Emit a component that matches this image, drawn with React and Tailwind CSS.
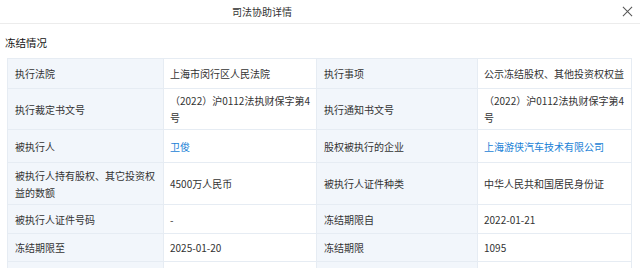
import { Fragment } from 'react';

const rows = [
  [
    { label: '执行法院', value: '上海市闵行区人民法院' },
    { label: '执行事项', value: '公示冻结股权、其他投资权权益' },
  ],
  [
    { label: '执行裁定书文号', value: ['（2022）沪0112法执财保字第4', '号'] },
    { label: '执行通知书文号', value: ['（2022）沪0112法执财保字第4', '号'] },
  ],
  [
    { label: '被执行人', value: '卫俊', link: true },
    { label: '股权被执行的企业', value: '上海游侠汽车技术有限公司', link: true },
  ],
  [
    { label: ['被执行人持有股权、其它投资权', '益的数额'], value: '4500万人民币' },
    { label: '被执行人证件种类', value: '中华人民共和国居民身份证' },
  ],
  [
    { label: '被执行人证件号码', value: '-' },
    { label: '冻结期限自', value: '2022-01-21' },
  ],
  [
    { label: '冻结期限至', value: '2025-01-20' },
    { label: '冻结期限', value: '1095' },
  ],
  [
    { label: '公示日期', value: '2022-01-21' },
    { label: '', value: '' },
  ],
];

const heights = ['h-[30px]', 'h-[40px]', 'h-[33px]', 'h-[42px]', 'h-[29px]', 'h-[28px]', 'h-[28px]'];

function Lines({ text }) {
  if (!Array.isArray(text)) return text;
  return text.map((t, i) => (
    <span key={i} className="block">{t}</span>
  ));
}

export default function App() {
  return (
    <div
      className="w-[640px] h-[268px] overflow-hidden bg-white text-[#333]"
      style={{ fontFamily: '"Noto Sans CJK SC", "Noto Sans", sans-serif' }}
    >
      <div className="h-[24px] border-b border-[#ececec] flex items-center pr-[7px]">
        <span className="pl-[232px] text-[10px] text-[#333] leading-none">司法协助详情</span>
        <svg className="ml-auto w-[11px] h-[11px]" viewBox="0 0 12 12" fill="none" stroke="#555" strokeWidth="1.1">
          <path d="M1 1l10 10M11 1L1 11" />
        </svg>
      </div>

      <div className="h-[34px] flex items-center pl-[5px] pt-[4px] text-[10.5px] text-[#111]">冻结情况</div>

      <table className="ml-[7px] border-collapse table-fixed w-[624px] text-[10px] leading-[17px] whitespace-nowrap">
        <colgroup>
          <col className="w-[156px]" />
          <col className="w-[153px]" />
          <col className="w-[161px]" />
          <col className="w-[154px]" />
        </colgroup>
        <tbody>
          {rows.map((row, i) => (
            <tr key={i} className={heights[i]}>
              {row.map((cell, j) => (
                <Fragment key={j}>
                  <td className="bg-[#f2f6fb] border border-[#e6ecf3] px-[7px] py-[3px] align-middle">
                    <Lines text={cell.label} />
                  </td>
                  <td
                    className={
                      'bg-white border border-[#e6ecf3] px-[6px] py-[3px] align-middle ' +
                      (cell.link ? 'text-[#1a7fd6]' : 'text-[#333]')
                    }
                  >
                    <Lines text={cell.value} />
                  </td>
                </Fragment>
              ))}
            </tr>
          ))}
        </tbody>
      </table>
    </div>
  );
}
